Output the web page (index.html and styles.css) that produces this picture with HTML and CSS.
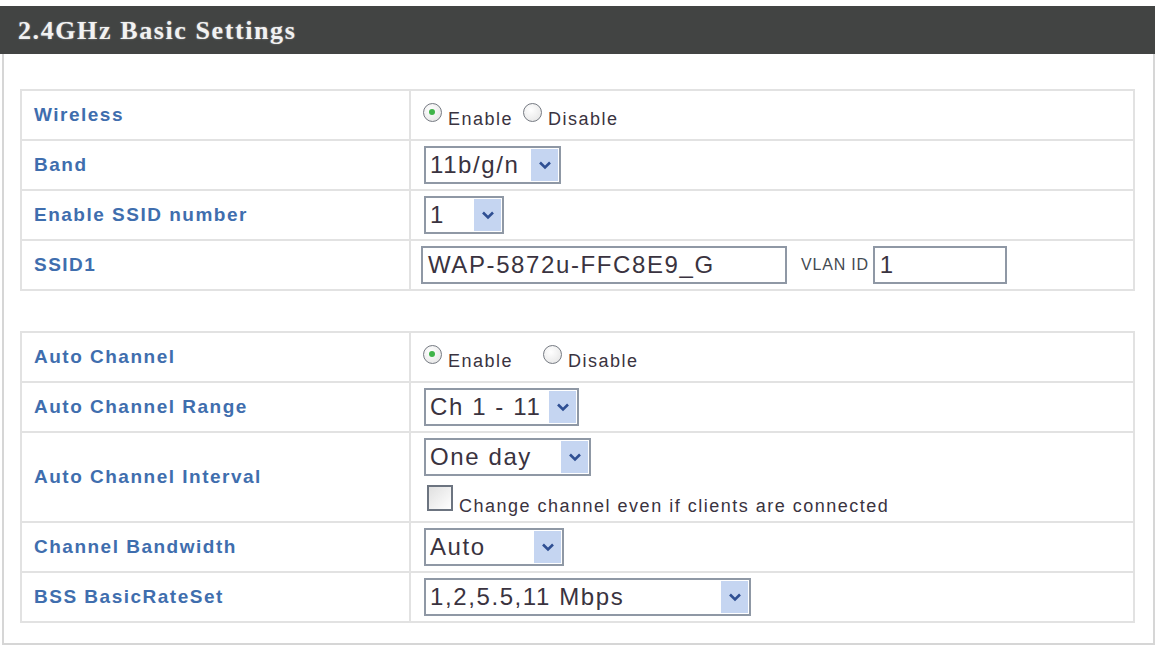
FILE: index.html
```html
<!DOCTYPE html>
<html lang="en">
<head>
    <meta charset="UTF-8">
    <meta name="viewport" content="width=device-width, initial-scale=1.0">
    <title>2.4GHz Basic Settings</title>
    <link rel="stylesheet" href="styles.css">
</head>
<body>
    <div class="panel">
        <div class="panel-head">2.4GHz Basic Settings</div>
        <div class="panel-body">
            <table class="settings">
                <tr>
                    <td class="label">Wireless</td>
                    <td class="value">
                        <div class="radio-line">
                            <span class="radio checked"></span><span class="opt">Enable</span>
                            <span class="radio"></span><span class="opt">Disable</span>
                        </div>
                    </td>
                </tr>
                <tr>
                    <td class="label">Band</td>
                    <td class="value">
                        <div class="select w-band"><span class="sel-text">11b/g/n</span><span class="sel-arrow"><svg width="14" height="10" viewBox="0 0 14 10"><path d="M2 2.5 L7 7.5 L12 2.5" fill="none" stroke="#2f4f93" stroke-width="2.6"/></svg></span></div>
                    </td>
                </tr>
                <tr>
                    <td class="label">Enable SSID number</td>
                    <td class="value">
                        <div class="select w-num"><span class="sel-text">1</span><span class="sel-arrow"><svg width="14" height="10" viewBox="0 0 14 10"><path d="M2 2.5 L7 7.5 L12 2.5" fill="none" stroke="#2f4f93" stroke-width="2.6"/></svg></span></div>
                    </td>
                </tr>
                <tr>
                    <td class="label">SSID1</td>
                    <td class="value">
                        <div class="ssid-line">
                            <div class="textbox w-ssid">WAP-5872u-FFC8E9_G</div>
                            <span class="vlan">VLAN ID</span>
                            <div class="textbox w-vlan">1</div>
                        </div>
                    </td>
                </tr>
            </table>

            <table class="settings">
                <tr>
                    <td class="label">Auto Channel</td>
                    <td class="value">
                        <div class="radio-line">
                            <span class="radio checked"></span><span class="opt wide">Enable</span>
                            <span class="radio"></span><span class="opt">Disable</span>
                        </div>
                    </td>
                </tr>
                <tr>
                    <td class="label">Auto Channel Range</td>
                    <td class="value">
                        <div class="select w-range"><span class="sel-text">Ch 1 - 11</span><span class="sel-arrow"><svg width="14" height="10" viewBox="0 0 14 10"><path d="M2 2.5 L7 7.5 L12 2.5" fill="none" stroke="#2f4f93" stroke-width="2.6"/></svg></span></div>
                    </td>
                </tr>
                <tr>
                    <td class="label">Auto Channel Interval</td>
                    <td class="value">
                        <div class="select w-interval"><span class="sel-text">One day</span><span class="sel-arrow"><svg width="14" height="10" viewBox="0 0 14 10"><path d="M2 2.5 L7 7.5 L12 2.5" fill="none" stroke="#2f4f93" stroke-width="2.6"/></svg></span></div>
                        <div class="check-line">
                            <span class="checkbox"></span><span class="opt">Change channel even if clients are connected</span>
                        </div>
                    </td>
                </tr>
                <tr>
                    <td class="label">Channel Bandwidth</td>
                    <td class="value">
                        <div class="select w-bw"><span class="sel-text">Auto</span><span class="sel-arrow"><svg width="14" height="10" viewBox="0 0 14 10"><path d="M2 2.5 L7 7.5 L12 2.5" fill="none" stroke="#2f4f93" stroke-width="2.6"/></svg></span></div>
                    </td>
                </tr>
                <tr>
                    <td class="label">BSS BasicRateSet</td>
                    <td class="value">
                        <div class="select w-rate"><span class="sel-text">1,2,5.5,11 Mbps</span><span class="sel-arrow"><svg width="14" height="10" viewBox="0 0 14 10"><path d="M2 2.5 L7 7.5 L12 2.5" fill="none" stroke="#2f4f93" stroke-width="2.6"/></svg></span></div>
                    </td>
                </tr>
            </table>
        </div>
    </div>
</body>
</html>
```

FILE: styles.css
```css
body {
    margin: 0;
    padding-top: 6px;
    background-color: #ffffff;
    font-family: "Liberation Sans", Arial, sans-serif;
}
.panel {
    width: 1155px;
}
.panel-head {
    height: 48px;
    background-color: #424443;
    color: #f2f2f2;
    font-family: "Liberation Serif", "Times New Roman", serif;
    font-weight: bold;
    font-size: 26px;
    letter-spacing: 1.6px;
    line-height: 50px;
    padding-left: 18px;
    text-shadow: 0 0 2px rgba(255, 255, 255, 0.4);
}
.panel-body {
    margin-left: 2px;
    border: 2px solid #d6d6d6;
    border-top: none;
    padding: 35px 18px 20px 16px;
}
.settings {
    width: 100%;
    border-collapse: collapse;
    border: 2px solid #e2e2e2;
}
.settings + .settings {
    margin-top: 40px;
}
.settings td {
    border: 2px solid #e2e2e2;
    padding: 5px 0;
    height: 38px;
}
.label {
    width: 375px;
    padding-left: 12px !important;
    color: #3f6eae;
    font-weight: bold;
    font-size: 19px;
    letter-spacing: 1.5px;
}
.value {
    padding-left: 10px !important;
    color: #3a3340;
}
.radio-line,
.check-line,
.ssid-line {
    display: flex;
    align-items: center;
}
.radio-line {
    height: 38px;
}
.radio {
    width: 19px;
    height: 19px;
    border: 1.5px solid #767b83;
    border-radius: 50%;
    background: radial-gradient(circle at 40% 35%, #ffffff 0%, #e2e2e2 100%);
    margin-left: 2px;
    margin-right: 6px;
    position: relative;
    top: -3px;
    box-sizing: border-box;
}
.radio.checked::after {
    content: "";
    position: absolute;
    left: 5px;
    top: 5px;
    width: 6px;
    height: 6px;
    border-radius: 50%;
    background-color: #3fb449;
}
.opt {
    font-size: 18px;
    letter-spacing: 1.5px;
    margin-right: 8px;
    position: relative;
    top: 4px;
}
.opt.wide {
    margin-right: 28px;
}
.select,
.textbox {
    box-sizing: border-box;
    height: 38px;
    border: 2px solid #8f98a5;
    background-color: #ffffff;
    font-size: 24px;
    letter-spacing: 1.6px;
    color: #3a3340;
}
.select {
    display: flex;
    align-items: stretch;
    justify-content: space-between;
    margin-left: 3px;
}
.sel-text {
    padding-left: 4px;
    line-height: 34px;
    white-space: nowrap;
}
.sel-arrow {
    width: 27px;
    margin: 1px;
    background-color: #c5d5f1;
    display: flex;
    align-items: center;
    justify-content: center;
}
.w-band { width: 137px; }
.w-num { width: 80px; }
.w-range { width: 155px; }
.w-interval { width: 167px; }
.w-bw { width: 140px; }
.w-rate { width: 327px; }
.textbox {
    line-height: 34px;
    padding-left: 5px;
    white-space: nowrap;
}
.w-ssid { width: 366px; }
.w-vlan { width: 134px; }
.vlan {
    font-size: 16px;
    letter-spacing: 0.8px;
    margin: 0 4px 0 14px;
    color: #444a52;
}
.check-line {
    margin-top: 10px;
    margin-left: 6px;
    height: 30px;
}
.checkbox {
    width: 26px;
    height: 26px;
    box-sizing: border-box;
    border: 2px solid #6c7480;
    background: linear-gradient(135deg, #e0e0e0, #ffffff);
    margin-right: 6px;
    position: relative;
    top: -3px;
}
.check-line .opt {
    top: 5px;
}
```
